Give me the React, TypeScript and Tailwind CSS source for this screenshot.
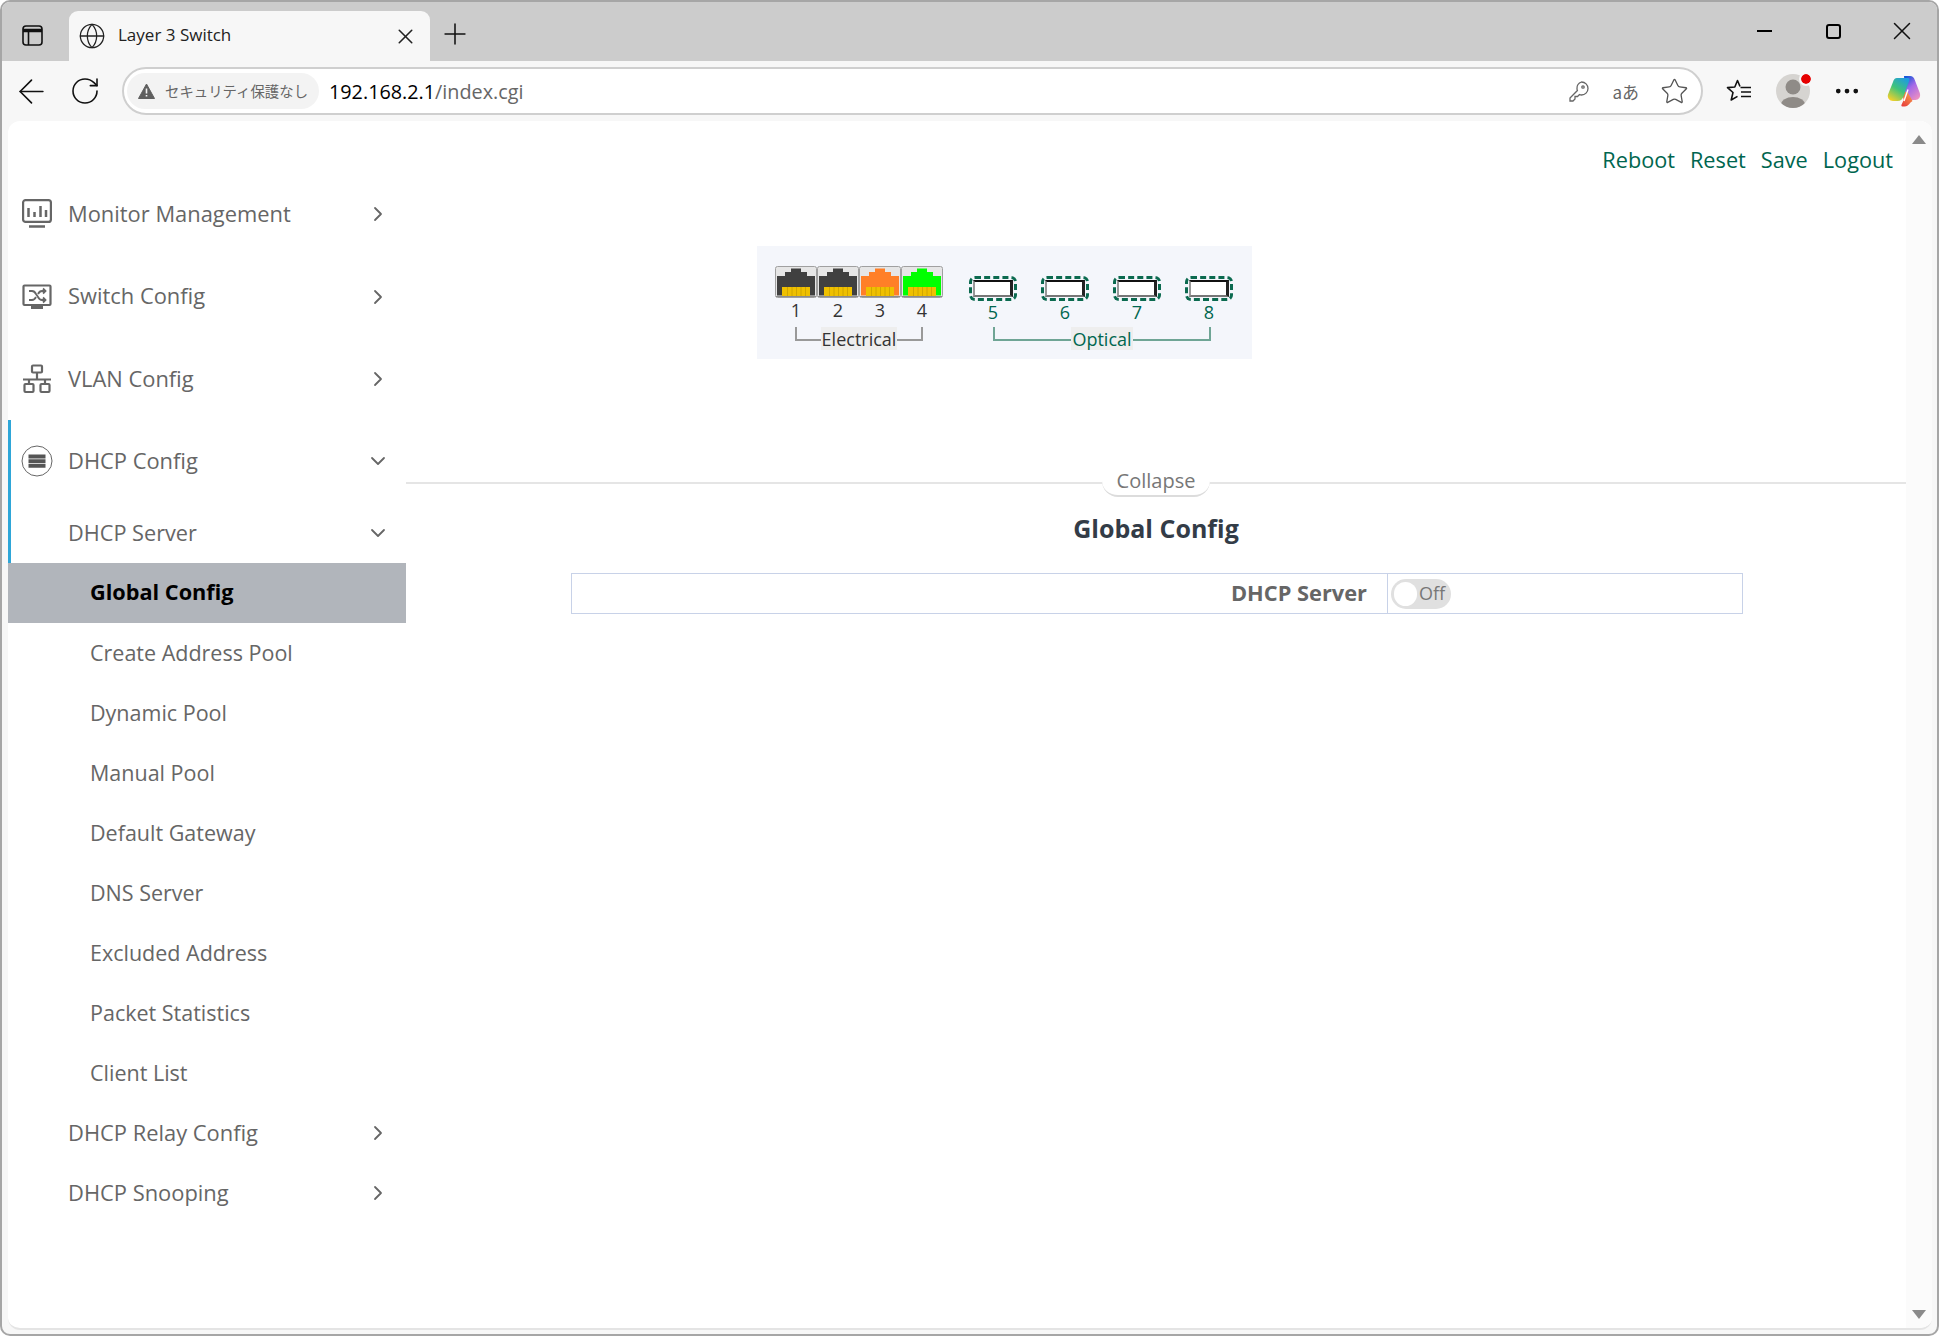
import { ArrowLeft, ChevronDown, ChevronRight, Ellipsis, Globe, Plus, RotateCw, Star, X } from "lucide-react";

const subItems = ["Create Address Pool", "Dynamic Pool", "Manual Pool", "Default Gateway", "DNS Server", "Excluded Address", "Packet Statistics", "Client List"];

function MonitorIcon() {
  return (
    <svg width="30" height="30" viewBox="0 0 30 30" fill="none" stroke="#666" strokeWidth="2.200">
      <rect x="1.100" y="1.100" width="27.800" height="21.800" rx="2.500" />
      <path d="M7 27.500h16" strokeWidth="2.500" />
      <path d="M6.500 9v9M12.500 13v5M18.500 7v11M24 11v7" strokeWidth="2.500" />
    </svg>
  );
}

function SwitchIcon() {
  return (
    <svg width="30" height="26" viewBox="0 0 30 26" fill="none" stroke="#666" strokeWidth="2.200">
      <rect x="1.500" y="1.500" width="27" height="19.500" rx="1" />
      <path d="M9 21h12v4H9z" fill="#666" stroke="none" />
      <path d="M7 7h3c2 0 3 1 4 3l2 3c1 2 2 3 4 3h3M7 16h3c2 0 3-1 4-3M16 10c1-2 2-3 4-3h3M21 4.500 23.500 7 21 9.500M21 13.500 23.500 16 21 18.500" strokeWidth="1.800" />
    </svg>
  );
}

function NetworkIcon() {
  return (
    <svg width="30" height="30" viewBox="0 0 30 30" fill="none" stroke="#666" strokeWidth="2.200">
      <rect x="10" y="1.500" width="10" height="7" rx="1" />
      <path d="M15 8.500V15M1 15.500h28M7 15.500V20M23 15.500V20" />
      <rect x="2.500" y="20" width="9" height="8" rx="1" />
      <rect x="18.500" y="20" width="9" height="8" rx="1" />
    </svg>
  );
}

function DhcpIcon() {
  return (
    <svg width="32" height="32" viewBox="0 0 32 32" fill="none">
      <circle cx="16" cy="16" r="15" stroke="#666" strokeWidth="1" />
      <path d="M7.500 9.500h17v4h-17zM7.500 14.200h17v4h-17zM7.500 18.900h17v3.800h-17z" fill="#555" />
    </svg>
  );
}

function SidebarToggleIcon() {
  return (
    <svg width="21" height="21" viewBox="0 0 21 21" fill="none" stroke="#111" strokeWidth="1.600">
      <rect x="1" y="1" width="19" height="19" rx="3" />
      <path d="M1 5.500h19" strokeWidth="3.500" />
      <path d="M6.500 6v14" />
    </svg>
  );
}

function WarningIcon() {
  return (
    <svg width="17" height="16" viewBox="0 0 17 16">
      <path d="M8.500 1 16.500 15.500H.5z" fill="#5f5f5f" stroke="#5f5f5f" strokeLinejoin="round" />
      <path d="M8.500 5.500v5M8.500 12v1.600" stroke="#f3f3f3" strokeWidth="1.600" />
    </svg>
  );
}

function KeyIcon() {
  return (
    <svg width="22" height="22" viewBox="0 0 22 22" fill="none" stroke="#666" strokeWidth="1.300">
      <path d="M13.500 2a6.500 6.500 0 0 1 6.500 6.500c0 3.600-3 6.500-6.500 6.500-.8 0-1.400-.2-2-.4L9.500 16.500H7v2.500l-2 2H2v-3l7.400-7.500c-.3-.7-.4-1.400-.4-2A6.500 6.500 0 0 1 13.500 2z" />
      <circle cx="15" cy="7" r="1.200" />
    </svg>
  );
}

function FavoritesIcon() {
  return (
    <svg width="26" height="24" viewBox="0 0 26 24" fill="none" stroke="#111" strokeWidth="1.600" strokeLinejoin="round">
      <path d="M14 7.500 11.500 1.500 8.800 8 1.500 8.600l5.500 4.900L5.200 21l6.300-3.600" />
      <path d="M14.500 8.500H25M15 13H25M15 17.500H25" strokeWidth="1.500" />
    </svg>
  );
}

function ProfileIcon() {
  return (
    <div className="relative">
      <svg width="34" height="34" viewBox="0 0 34 34">
        <defs>
          <clipPath id="avatar">
            <circle cx="17" cy="17" r="17" />
          </clipPath>
        </defs>
        <circle cx="17" cy="17" r="17" fill="#d6d4d1" />
        <g clipPath="url(#avatar)" fill="#8f8b87">
          <circle cx="17" cy="13" r="7.500" />
          <ellipse cx="17" cy="31" rx="12" ry="8" />
        </g>
      </svg>
      <span className="absolute right-[-1px] top-[0px] h-[10px] w-[10px] rounded-full bg-[#e60000] outline-2 outline-[#f7f7f7]" />
    </div>
  );
}

function CopilotIcon() {
  return (
    <svg width="34" height="32" viewBox="0 0 34 32">
      <defs>
        <linearGradient id="copA" x1="0.800" y1="0" x2="0.200" y2="1">
          <stop offset="0" stopColor="#1f9be0" />
          <stop offset="0.500" stopColor="#3fc47a" />
          <stop offset="1" stopColor="#f5d02a" />
        </linearGradient>
        <linearGradient id="copB" x1="0.200" y1="0" x2="0.800" y2="1">
          <stop offset="0" stopColor="#1657d8" />
          <stop offset="0.450" stopColor="#a56ae8" />
          <stop offset="1" stopColor="#ee90c0" />
        </linearGradient>
        <linearGradient id="copC" x1="0.800" y1="0" x2="0.200" y2="1">
          <stop offset="0" stopColor="#f8a04a" />
          <stop offset="1" stopColor="#e8403c" />
        </linearGradient>
      </defs>
      <path d="M17 1h6c2.500 0 3.900 1.200 4.800 4L32.800 18c1.200 4-1 7-4.500 7H21l-3-8-1-16z" fill="url(#copB)" />
      <path d="M15 17h5.500l5 9-2 1.500c-2 2.500-3.500 4-6 4h-2c-1.500 0-1.200-1-.8-2.200l2-4.300z" fill="url(#copC)" />
      <path d="M10 3h11c1.500 0 1.800 1 1.200 3l-5.500 15c-1 3-3 5-6.200 5H6c-3.500 0-6-3-5-6.500L6 7c.7-2.500 2-4 4-4z" fill="url(#copA)" />
      <path d="M21 14.500 17 26" stroke="#fff" strokeWidth="1.400" />
    </svg>
  );
}

function RjPort({ color }: { color: string }) {
  return (
    <svg width="42" height="32" viewBox="0 0 42 32">
      <rect x="0.500" y="0.500" width="41" height="31" rx="2" fill="#e6e6e6" stroke="#a0a0a0" />
      <path d="M2 29.500V10H10V6H16V2.500H26V6H32V10H40V29.500Z" fill={color} />
      <path d="M7 21H35V30H7Z" fill="#efc000" />
      <path d="M12.500 21v9M17 21v9M21.500 21v9M26 21v9M30.500 21v9" stroke="#c9a000" strokeWidth="0.800" />
      <path d="M1 30.500H41" stroke="#8c8c8c" />
    </svg>
  );
}

function OpticalPort() {
  return (
    <div className="h-[25px] w-[48px] rounded-[6px] border-[3px] border-dashed border-[#0b6a4f] p-[1px]">
      <div className="h-full w-full border-y-2 border-l-2 border-r-[3px] border-t-[#111] border-r-[#222] border-b-[#777] border-l-[#999] bg-white" />
    </div>
  );
}

function Bracket({ label, width, labelWidth, color, text }: { label: string; width: string; labelWidth: string; color: string; text: string }) {
  return (
    <div className={`relative h-[14px] border-x-2 border-b-2 ${width} ${color}`}>
      <span className={`absolute left-1/2 top-0 flex h-[23px] -translate-x-1/2 items-center justify-center bg-[#eeeeee] text-[18px] ${labelWidth} ${text}`}>
        {label}
      </span>
    </div>
  );
}

function TopItem({ icon, label, open }: { icon: React.ReactNode; label: string; open?: boolean }) {
  return (
    <div className={`flex h-[82.4px] items-center text-[#666] ${open ? "border-l-[3px] border-[#2ea6d8] pl-[10px]" : "pl-[13px]"}`}>
      <span className="flex w-[47px] items-center justify-center pr-[15px]">{icon}</span>
      <span className="flex-1">{label}</span>
      {open ? <ChevronDown size={24} strokeWidth={1.8} className="mr-[16px]" /> : <ChevronRight size={24} strokeWidth={1.8} className="mr-[16px]" />}
    </div>
  );
}

function SubItem({ label }: { label: string }) {
  return <div className="flex h-[60px] items-center pl-[82px] pt-[1px] text-[21.500px] text-[#666]">{label}</div>;
}

function GroupItem({ label }: { label: string }) {
  return (
    <div className="flex h-[60px] items-center pl-[60px] pt-[1px] text-[#666]">
      <span className="flex-1">{label}</span>
      <ChevronRight size={24} strokeWidth={1.8} className="mr-[16px]" />
    </div>
  );
}

export default function App() {
  return (
    <div className="flex h-[1336px] w-[1939px] flex-col overflow-hidden rounded-[10px] border-2 border-[#a6a6a6] bg-[#f7f7f7] font-['Open_Sans',sans-serif]">
      <div className="flex h-[59px] shrink-0 items-end bg-[#cccccc] pl-[20px]">
        <div className="mb-[15px] mr-[26px]">
          <SidebarToggleIcon />
        </div>
        <div className="flex h-[50px] w-[361px] items-center rounded-t-[9px] bg-[#f7f7f7] pl-[9px] pr-[12px]">
          <Globe size={28} strokeWidth={1.1} color="#222" />
          <span className="ml-[12px] flex-1 pb-[2px] text-[17px] text-[#222]">Layer 3 Switch</span>
          <X size={25} color="#222" strokeWidth={1.5} />
        </div>
        <Plus size={34} strokeWidth={1.1} color="#111" className="mb-[10px] ml-[8px]" />
        <div className="mb-[15px] ml-auto flex items-center pr-[20px]">
          <span className="h-[2px] w-[15px] bg-black" />
          <span className="ml-[54px] h-[15px] w-[15px] rounded-[3px] border-2 border-black" />
          <X size={30} strokeWidth={1.2} color="#111" className="ml-[46px]" />
        </div>
      </div>

      <div className="flex h-[60px] shrink-0 items-center pl-[10px]">
        <ArrowLeft size={39} strokeWidth={1} color="#111" />
        <RotateCw size={32} strokeWidth={1.2} color="#111" className="ml-[18px]" />
        <div className="ml-[21px] flex h-[48px] w-[1581px] shrink-0 items-center rounded-full border-2 border-[#cfcfcf] bg-white pl-[3px] pr-[12px]">
          <div className="flex h-[36px] w-[192px] shrink-0 items-center rounded-full bg-[#f3f3f3] pl-[11px]">
            <WarningIcon />
            <span className="ml-[10px] whitespace-nowrap font-['Noto_Sans_CJK_JP',sans-serif] text-[14.400px] text-[#666]">セキュリティ保護なし</span>
          </div>
          <span className="ml-[10px] flex-1 pt-[1px] text-[19.800px]">
            <span className="text-black">192.168.2.1</span>
            <span className="text-[#666]">/index.cgi</span>
          </span>
          <KeyIcon />
          <span className="ml-[22px] font-['Noto_Sans_CJK_JP',sans-serif] text-[17px] leading-none text-[#666]">aあ</span>
          <Star size={29} strokeWidth={1.1} color="#555" className="ml-[21px]" />
        </div>
        <div className="ml-[23px]">
          <FavoritesIcon />
        </div>
        <div className="ml-[24px]">
          <ProfileIcon />
        </div>
        <Ellipsis size={30} color="#111" strokeWidth={1.8} className="ml-[22px]" />
        <div className="ml-[25px]">
          <CopilotIcon />
        </div>
      </div>

      <div className="flex h-[1209px] shrink-0 pl-[6px]">
        <div className="flex w-[1924px] overflow-hidden rounded-[12px] border-b-2 border-[#e4e4e4] bg-white">
          <aside className="w-[398px] shrink-0 pt-[52px] text-[21.900px]">
            <TopItem icon={<MonitorIcon />} label="Monitor Management" />
            <TopItem icon={<SwitchIcon />} label="Switch Config" />
            <TopItem icon={<NetworkIcon />} label="VLAN Config" />
            <TopItem icon={<DhcpIcon />} label="DHCP Config" open />
            <div className="flex h-[60px] items-center border-l-[3px] border-[#2ea6d8] pl-[57px] pt-[1px] text-[21.700px] text-[#666]">
              <span className="flex-1">DHCP Server</span>
              <ChevronDown size={24} strokeWidth={1.8} className="mr-[16px]" />
            </div>
            <div className="flex h-[60px] items-center bg-[#b1b5bb] pl-[82px] text-[21.700px] font-bold text-black">Global Config</div>
            {subItems.map((label) => (
              <SubItem key={label} label={label} />
            ))}
            <GroupItem label="DHCP Relay Config" />
            <GroupItem label="DHCP Snooping" />
          </aside>

          <main className="flex min-w-0 flex-1 flex-col">
            <div className="flex justify-end gap-[15px] pr-[13px] pt-[22px] text-[21.700px] leading-[34px] text-[#00664f]">
              <span>Reboot</span>
              <span>Reset</span>
              <span>Save</span>
              <span>Logout</span>
            </div>

            <div className="ml-[351px] mt-[69px] flex h-[113px] w-[495px] shrink-0 bg-[#f4f6fb] pl-[18px] pt-[20px] text-[18px] leading-none">
              <div className="flex w-[194px] flex-col">
                <div className="flex">
                  <RjPort color="#404040" />
                  <RjPort color="#404040" />
                  <RjPort color="#ff7f27" />
                  <RjPort color="#00ff00" />
                </div>
                <div className="flex h-[29px] w-[168px] items-center pb-[5px] text-[#333]">
                  <span className="w-[42px] text-center">1</span>
                  <span className="w-[42px] text-center">2</span>
                  <span className="w-[42px] text-center">3</span>
                  <span className="w-[42px] text-center">4</span>
                </div>
                <div className="ml-[20px]">
                  <Bracket label="Electrical" width="w-[128px]" labelWidth="w-[76px]" color="border-[#999]" text="text-[#333]" />
                </div>
              </div>
              <div className="flex flex-col pt-[10px]">
                <div className="flex gap-[24px]">
                  <OpticalPort />
                  <OpticalPort />
                  <OpticalPort />
                  <OpticalPort />
                </div>
                <div className="flex h-[26px] gap-[24px] pt-[2px] text-[#00664f]">
                  <span className="w-[48px] text-center">5</span>
                  <span className="w-[48px] text-center">6</span>
                  <span className="w-[48px] text-center">7</span>
                  <span className="w-[48px] text-center">8</span>
                </div>
                <div className="ml-[24px]">
                  <Bracket label="Optical" width="w-[218px]" labelWidth="w-[62px]" color="border-[#6fa595]" text="text-[#00664f]" />
                </div>
              </div>
            </div>

            <div className="relative mt-[123px] h-[2px] shrink-0 bg-[#e5e5e5]">
              <span className="absolute left-1/2 top-[-12px] flex h-[27px] w-[108px] -translate-x-1/2 items-center justify-center rounded-b-[16px] border-b-2 border-[#dcdcdc] bg-white pb-[3px] text-[20px] text-[#777]">
                Collapse
              </span>
            </div>

            <h1 className="mt-[26px] text-center text-[25px] font-bold leading-[36px] text-[#333c47]">Global Config</h1>

            <div className="ml-[165px] mt-[27px] flex h-[41px] w-[1172px] shrink-0 border border-[#c8d2e8]">
              <div className="flex w-[816px] items-center justify-end border-r border-[#c8d2e8] pr-[20px] text-[21.800px] font-bold text-[#666]">DHCP Server</div>
              <div className="flex items-center pl-[3px]">
                <div className="flex h-[30px] w-[60px] items-center rounded-full bg-[#e0e0e0] pl-[3px] text-[18px] text-[#777]">
                  <span className="h-[24px] w-[23px] shrink-0 rounded-full bg-white" />
                  <span className="ml-[2px]">Off</span>
                </div>
              </div>
            </div>
          </main>

          <div className="flex w-[26px] shrink-0 flex-col items-center justify-between bg-[#fbfbfb] pb-[9px] pt-[14px]">
            <span className="h-0 w-0 border-x-[7px] border-b-[9px] border-x-transparent border-b-[#8a8a8a]" />
            <span className="h-0 w-0 border-x-[7px] border-t-[9px] border-x-transparent border-t-[#8a8a8a]" />
          </div>
        </div>
      </div>
    </div>
  );
}
